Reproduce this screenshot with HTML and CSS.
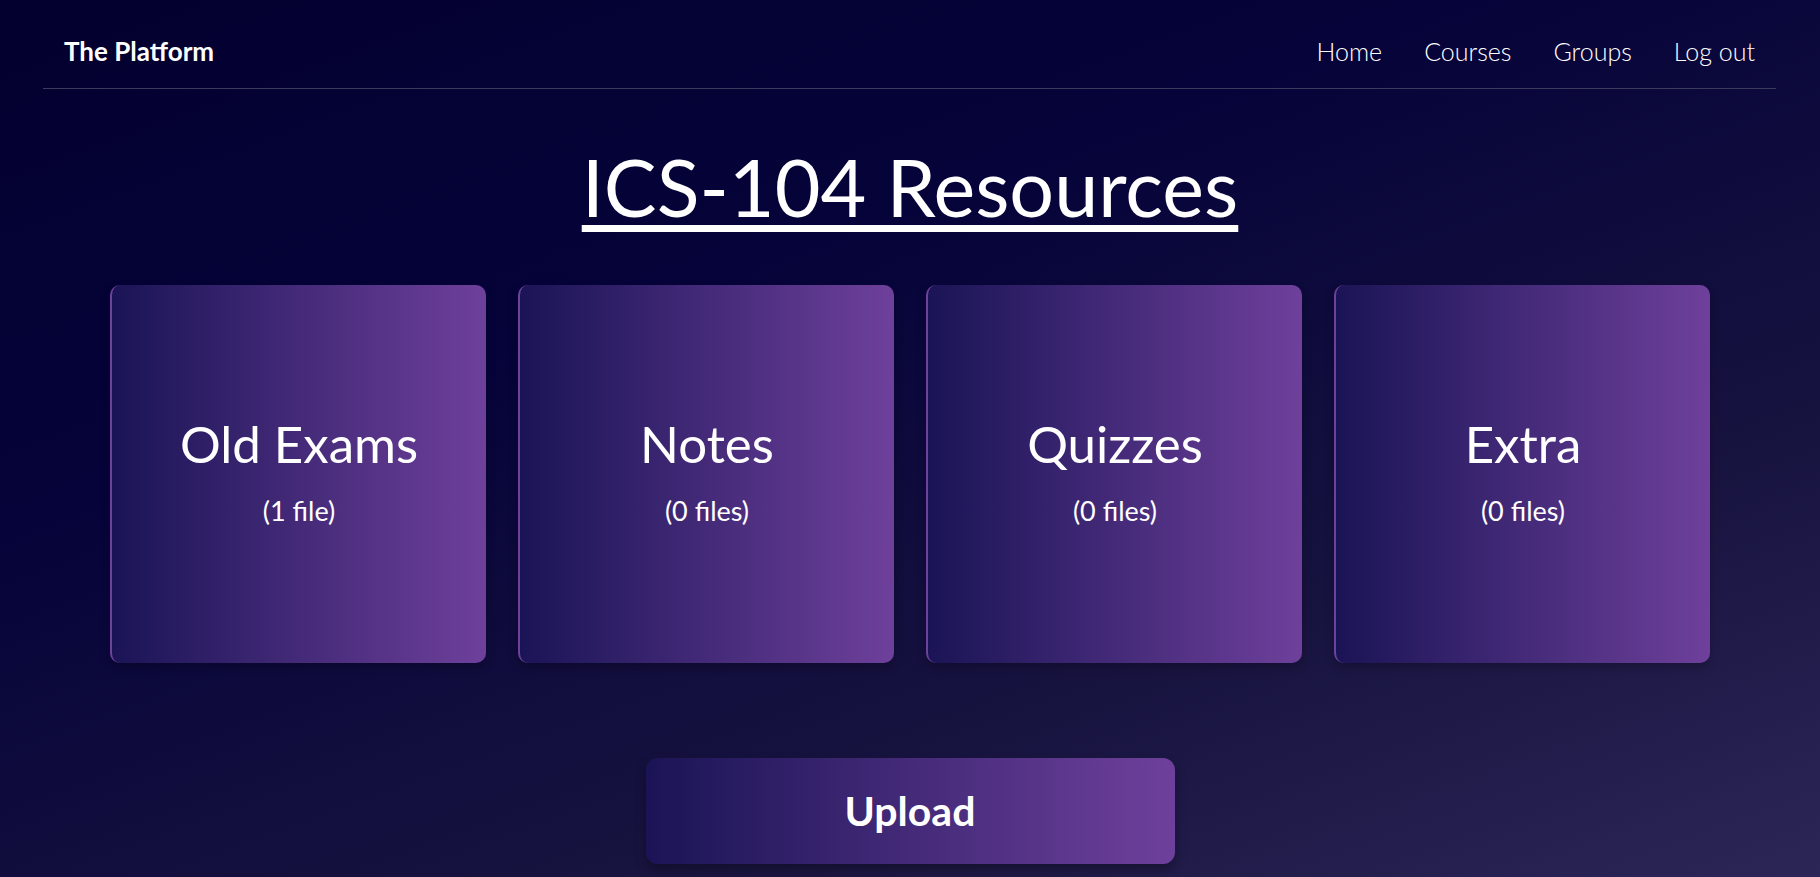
FILE: index.html
```html
<!DOCTYPE html>
<html lang="en">
<head>
<meta charset="utf-8">
<title>ICS-104 Resources</title>
<link rel="stylesheet" href="styles.css">
</head>
<body>
<header class="topbar">
  <div class="brand">The Platform</div>
  <nav class="nav">
    <a href="#">Home</a>
    <a href="#">Courses</a>
    <a href="#">Groups</a>
    <a href="#">Log out</a>
  </nav>
</header>
<main class="main">
  <h1 class="title">ICS-104 Resources</h1>
  <section class="cards">
    <a class="card" href="#"><span class="card-name">Old Exams</span><span class="card-count">(1 file)</span></a>
    <a class="card" href="#"><span class="card-name">Notes</span><span class="card-count">(0 files)</span></a>
    <a class="card" href="#"><span class="card-name">Quizzes</span><span class="card-count">(0 files)</span></a>
    <a class="card" href="#"><span class="card-name">Extra</span><span class="card-count">(0 files)</span></a>
  </section>
  <button class="upload" type="button">Upload</button>
</main>
</body>
</html>
```
FILE: styles.css
```css
html, body {
  margin: 0;
  padding: 0;
}
body {
  min-height: 100vh;
  font-family: Lato, "Noto Sans", sans-serif;
  color: #ffffff;
  background: linear-gradient(160deg, #03002f 0%, #06033a 35%, #17133f 70%, #2b2656 100%);
  overflow: hidden;
}
.topbar {
  margin: 0 44px 0 43px;
  height: 89px;
  padding: 0 21px;
  box-sizing: border-box;
  display: flex;
  align-items: center;
  justify-content: space-between;
  border-bottom: 1px solid #3c3b5e;
  padding-top: 14px;
}
.brand {
  font-size: 26px;
  font-weight: 700;
}
.nav {
  display: flex;
  gap: 42px;
}
.nav a {
  color: #ffffff;
  text-decoration: none;
  font-size: 25px;
  font-weight: 300;
}
.main {
  display: flex;
  flex-direction: column;
  align-items: center;
}
.title {
  margin: 51px 0 0;
  font-size: 79px;
  font-weight: 400;
  line-height: 1.2;
  text-decoration: underline;
  text-decoration-thickness: 7px;
  text-underline-offset: 8px;
}
.cards {
  margin-top: 50px;
  display: grid;
  grid-template-columns: repeat(4, 376px);
  gap: 32px;
}
.card {
  height: 378px;
  box-sizing: border-box;
  padding-bottom: 8px;
  border-radius: 10px;
  border-left: 2px solid #6d429c;
  background: linear-gradient(to right, #1a1456, #6e409b);
  box-shadow: 0 4px 10px rgba(0, 0, 0, 0.25);
  color: #ffffff;
  text-decoration: none;
  display: flex;
  flex-direction: column;
  align-items: center;
  justify-content: center;
}
.card-name {
  font-size: 51px;
  font-weight: 400;
  line-height: 1.2;
}
.card-count {
  margin-top: 20px;
  font-size: 27px;
  font-weight: 400;
}
.upload {
  margin-top: 95px;
  width: 529px;
  height: 106px;
  border: none;
  border-radius: 12px;
  background: linear-gradient(to right, #1a1456, #6e409b);
  box-shadow: 0 6px 12px rgba(0, 0, 0, 0.3);
  color: #ffffff;
  font-family: Lato, "Noto Sans", sans-serif;
  font-size: 41px;
  font-weight: 700;
  cursor: pointer;
}
```
